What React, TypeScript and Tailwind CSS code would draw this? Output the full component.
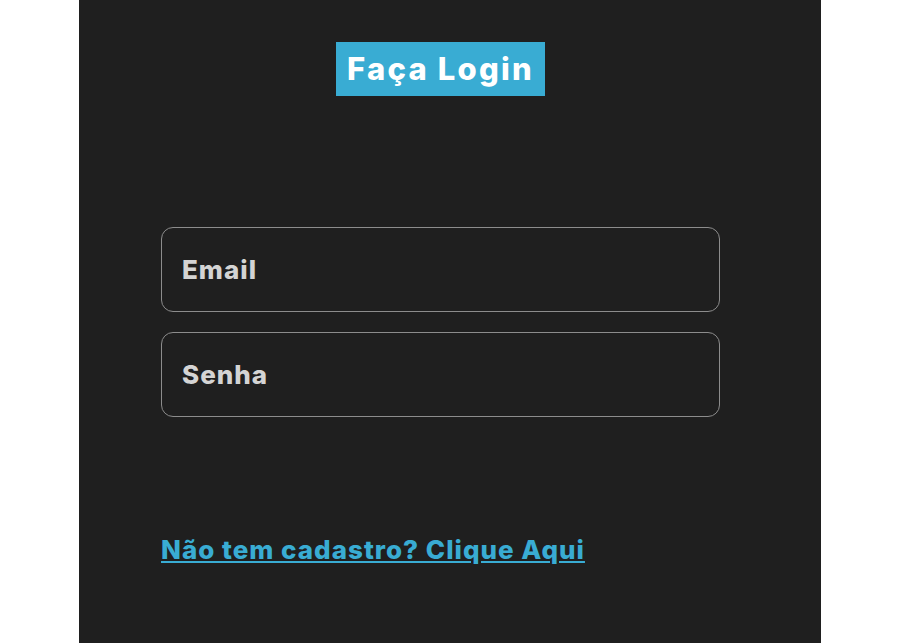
export default function App() {
  const font = { fontFamily: "Inter, 'Open Sans', sans-serif" };
  return (
    <div className="min-h-[643px] w-full bg-white flex justify-center" style={font}>
      <div className="w-[742px] min-h-[643px] bg-[#1f1f1f]">
        <div className="ml-[82px] w-[559px] flex flex-col">
          <div className="flex justify-center pt-[42px]">
            <h1 className="w-[209px] text-center bg-[#39acd3] text-white font-extrabold text-[31px] leading-[54px] h-[54px] tracking-[2.2px]">
              Faça Login
            </h1>
          </div>
          <div className="mt-[131px] flex flex-col gap-[20px]">
            <input
              placeholder="Email"
              className="h-[85px] w-full rounded-[12px] border border-[#8c8c8c] bg-transparent px-[20px] text-[26px] tracking-[1px] font-extrabold text-[#d4d4d4] placeholder:text-[#d4d4d4] outline-none"
            />
            <input
              placeholder="Senha"
              type="password"
              className="h-[85px] w-full rounded-[12px] border border-[#8c8c8c] bg-transparent px-[20px] text-[26px] tracking-[1px] font-extrabold text-[#d4d4d4] placeholder:text-[#d4d4d4] outline-none"
            />
          </div>
          <div className="mt-[118px]">
            <a href="#" className="text-[#39acd3] underline text-[26px] tracking-[1px] font-extrabold leading-[30px]">
              Não tem cadastro? Clique Aqui
            </a>
          </div>
        </div>
      </div>
    </div>
  );
}
